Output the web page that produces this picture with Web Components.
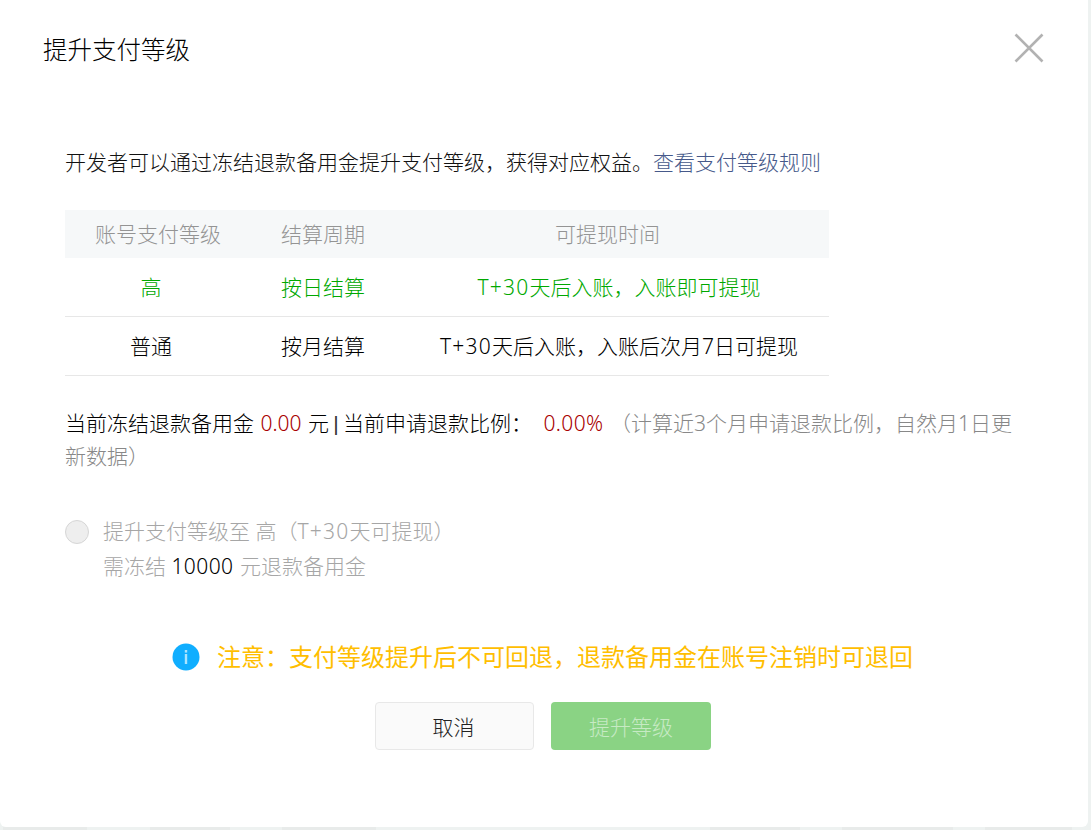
<!DOCTYPE html>
<html lang="zh-CN"><head><meta charset="utf-8"><style>
html,body{margin:0;height:100%;overflow:hidden;background:#eef2f1}
body{font-family:"Noto Sans","Noto Sans CJK SC",sans-serif;font-weight:300}
</style></head><body>
<pay-dialog title-text="提升支付等级">
  <intro-line>开发者可以通过冻结退款备用金提升支付等级，获得对应权益。<a slot="link">查看支付等级规则</a></intro-line>
  <level-table></level-table>
  <status-note></status-note>
  <level-option></level-option>
  <notice-line>注意：支付等级提升后不可回退，退款备用金在账号注销时可退回</notice-line>
  <dialog-actions></dialog-actions>
</pay-dialog>
<page-backdrop></page-backdrop>
<script>
function def(name,html){customElements.define(name,class extends HTMLElement{constructor(){super();this.attachShadow({mode:'open'}).innerHTML=html}})}
customElements.define('pay-dialog',class extends HTMLElement{constructor(){super();const t=this.getAttribute('title-text');this.attachShadow({mode:'open'}).innerHTML=`<style>
:host{display:block;width:1088px;height:827px;background:#fff;border-radius:0 0 6px 6px;box-sizing:border-box;color:#222}
header{display:flex;justify-content:space-between;align-items:flex-start;height:98px;padding:32px 44px 0 43px;box-sizing:border-box}
h1{margin:0;font-size:24.5px;font-weight:300;color:#000;line-height:36px}
svg{display:block;width:30px;height:30px;margin-top:1px}
main{padding:47px 0 0 65px;display:block}
</style><header><h1>${t}</h1><svg viewBox="0 0 30 30"><path d="M1.5 1.5 28.5 28.5M28.5 1.5 1.5 28.5" stroke="#b2b2b2" stroke-width="2.6" fill="none"/></svg></header><main><slot></slot></main>`}});
def('page-backdrop',`<style>:host{display:block;height:3px;background:linear-gradient(90deg,transparent 3px,#e8ebea 3px,#e8ebea 87px,transparent 87px,transparent 150px,#e8ebea 150px,#e8ebea 230px,transparent 230px,transparent 282px,#e8ebea 282px,#e8ebea 376px,transparent 376px,transparent 710px,#e8ebea 710px,#e8ebea 800px,transparent 800px,transparent 842px,#e8ebea 842px,#e8ebea 953px,transparent 953px,transparent 985px,#e8ebea 985px,#e8ebea 1072px,transparent 1072px)}</style>`);
def('intro-line',`<style>:host{display:block;font-size:21px;line-height:34px;color:#111;white-space:nowrap}::slotted(a){color:#46598a}</style><slot></slot><slot name="link"></slot>`);
def('level-table',`<style>
:host{display:block;width:764px;margin-top:31px;font-size:21px}
.r{display:grid;grid-template-columns:172px 172px 420px;padding-bottom:2px;box-sizing:content-box;height:56px;align-items:center;text-align:center;border-bottom:1px solid #e7e7e7;color:#000}
.h{height:46px;background:#f6f8f9;color:#949494;border:0}
.h div:first-child{padding-left:14px}.h div:last-child{padding-right:23px}
.g{color:#00a800}
s{text-decoration:none;letter-spacing:1.25px}
</style>
<div class="r h"><div>账号支付等级</div><div>结算周期</div><div>可提现时间</div></div>
<div class="r g"><div>高</div><div>按日结算</div><div><s>T+30</s>天后入账，入账即可提现</div></div>
<div class="r"><div>普通</div><div>按月结算</div><div><s>T+30</s>天后入账，入账后次月7日可提现</div></div>`);
def('status-note',`<style>:host{display:block;width:955px;margin-top:31px;font-size:21px;line-height:33px;color:#000}
b{font-weight:inherit;color:#a80000}b.a{margin:0 1px}b.p{letter-spacing:.4px;margin-right:1px}span{color:#888}
i{font-style:normal;display:inline-block;width:14px;text-align:center;font-family:"Liberation Sans",sans-serif;color:#333}</style>当前冻结退款备用金 <b class="a">0.00</b> 元<i>|</i>当前申请退款比例： <b class="p">&nbsp;0.00%</b> <span>（计算近3个月申请退款比例，自然月1日更新数据）</span>`);
def('level-option',`<style>:host{display:flex;margin-top:41px;font-size:21px;line-height:35px;color:#a6a6a6}
i{flex:none;width:22px;height:22px;border:1px solid #d6d6d6;background:#eeeeee;border-radius:50%;margin:6px 14px 0 0}
b{font-weight:inherit;color:#000;letter-spacing:.4px;margin-right:1px}s{text-decoration:none;letter-spacing:1.25px}</style><i></i><div>提升支付等级至 高（<s>T+30</s>天可提现）<br>需冻结 <b>10000</b> 元退款备用金</div>`);
def('notice-line',`<style>:host{display:flex;align-items:center;gap:17px;justify-content:center;width:1085px;margin-left:-65px;margin-top:55px;font-size:24px;font-weight:400;line-height:36px;color:#ffbe00}
svg{width:28px;height:28px;flex:none}</style><svg viewBox="0 0 28 28"><circle cx="14" cy="14" r="13.5" fill="#10aeff"/><rect x="12.8" y="7" width="2.4" height="2.6" fill="#a9e4ff"/><rect x="12.8" y="11" width="2.4" height="10" fill="#a9e4ff"/></svg><slot></slot>`);
def('dialog-actions',`<style>:host{display:flex;gap:17px;margin:27px 0 0 310px;font-size:21px}
div{height:48px;box-sizing:border-box;border-radius:4px;display:flex;align-items:center;justify-content:center}
.c{width:159px;background:#fafafa;border:1px solid #e8e8e8;color:#222;padding-right:2px}
.p{width:160px;background:#8ad384;color:#c7eac4}</style><div class="c">取消</div><div class="p">提升等级</div>`);
</script></body></html>
